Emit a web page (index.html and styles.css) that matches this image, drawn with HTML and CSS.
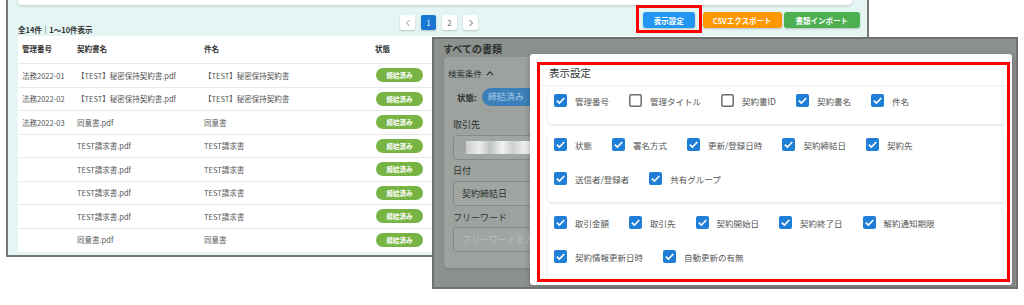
FILE: index.html
```html
<!DOCTYPE html>
<html lang="ja">
<head>
    <meta charset="UTF-8">
    <title>表示設定</title>
    <link rel="stylesheet" href="styles.css">
</head>
<body>
    <svg class="defs" width="0" height="0">
        <symbol id="cb-on" viewBox="0 0 13 13">
            <rect width="13" height="13" rx="2" fill="#1f7fd6"/>
            <path d="M2.8 6.6 L5.4 9.1 L10.3 4" fill="none" stroke="#fff" stroke-width="1.6"/>
        </symbol>
        <symbol id="cb-off" viewBox="0 0 13 13">
            <rect x="0.8" y="0.8" width="11.4" height="11.4" rx="1.5" fill="#fff" stroke="#6c6c6c" stroke-width="1.5"/>
        </symbol>
    </svg>

    <div class="stage">
        <!-- document list screenshot -->
        <section class="shot-list">
            <div class="top-card"></div>
            <div class="toolbar">
                <span class="count">全14件｜1～10件表示</span>
                <nav class="pager">
                    <span class="page"><svg width="6" height="8" viewBox="0 0 6 8"><path d="M4.5 1 L1.5 4 L4.5 7" fill="none" stroke="#999" stroke-width="1"/></svg></span>
                    <span class="page active">1</span>
                    <span class="page">2</span>
                    <span class="page"><svg width="6" height="8" viewBox="0 0 6 8"><path d="M1.5 1 L4.5 4 L1.5 7" fill="none" stroke="#666" stroke-width="1"/></svg></span>
                </nav>
                <span></span>
                <div class="actions">
                    <span class="mark"><button class="btn btn-blue">表示設定</button></span>
                    <button class="btn btn-orange">CSVエクスポート</button>
                    <button class="btn btn-green">書類インポート</button>
                </div>
            </div>
            <div class="doc-table">
                <div class="tr head"><span>管理番号</span><span>契約書名</span><span>件名</span><span>状態</span></div>
                <div class="tr"><span>法務2022-01</span><span>【TEST】秘密保持契約書.pdf</span><span>【TEST】秘密保持契約書</span><span><i class="badge">締結済み</i></span></div>
                <div class="tr"><span>法務2022-02</span><span>【TEST】秘密保持契約書.pdf</span><span>【TEST】秘密保持契約書</span><span><i class="badge">締結済み</i></span></div>
                <div class="tr"><span>法務2022-03</span><span>同意書.pdf</span><span>同意書</span><span><i class="badge">締結済み</i></span></div>
                <div class="tr"><span></span><span>TEST請求書.pdf</span><span>TEST請求書</span><span><i class="badge">締結済み</i></span></div>
                <div class="tr"><span></span><span>TEST請求書.pdf</span><span>TEST請求書</span><span><i class="badge">締結済み</i></span></div>
                <div class="tr"><span></span><span>TEST請求書.pdf</span><span>TEST請求書</span><span><i class="badge">締結済み</i></span></div>
                <div class="tr"><span></span><span>TEST請求書.pdf</span><span>TEST請求書</span><span><i class="badge">締結済み</i></span></div>
                <div class="tr"><span></span><span>同意書.pdf</span><span>同意書</span><span><i class="badge">締結済み</i></span></div>
            </div>
        </section>

        <!-- settings dialog screenshot, pasted over the first one -->
        <section class="shot-modal">
            <h2 class="page-title">すべての書類</h2>
            <div class="search-card">
                <div class="search-head">検索条件 <svg width="8" height="6" viewBox="0 0 8 6"><path d="M1 5 L4 1.8 L7 5" fill="none" stroke="#2e3230" stroke-width="1.1"/></svg></div>
                <div class="state-row"><b>状態:</b><span class="pill">締結済み</span></div>
                <div class="field-label">取引先</div>
                <div class="field"><span class="blur-img"></span></div>
                <div class="field-label gap-s">日付</div>
                <div class="field">契約締結日</div>
                <div class="field-label gap-m">フリーワード</div>
                <div class="field placeholder">フリーワードを入力</div>
            </div>

            <div class="modal">
                <div class="modal-body">
                    <div class="modal-title">表示設定</div>
                    <div class="groups">
                        <div class="group">
                            <div class="row">
                                <label class="item"><svg><use href="#cb-on"/></svg>管理番号</label>
                                <label class="item"><svg><use href="#cb-off"/></svg>管理タイトル</label>
                                <label class="item"><svg><use href="#cb-off"/></svg>契約書ID</label>
                                <label class="item"><svg><use href="#cb-on"/></svg>契約書名</label>
                                <label class="item"><svg><use href="#cb-on"/></svg>件名</label>
                            </div>
                        </div>
                        <div class="group">
                            <div class="row">
                                <label class="item"><svg><use href="#cb-on"/></svg>状態</label>
                                <label class="item"><svg><use href="#cb-on"/></svg>署名方式</label>
                                <label class="item"><svg><use href="#cb-on"/></svg>更新/登録日時</label>
                                <label class="item"><svg><use href="#cb-on"/></svg>契約締結日</label>
                                <label class="item"><svg><use href="#cb-on"/></svg>契約先</label>
                            </div>
                            <div class="row">
                                <label class="item"><svg><use href="#cb-on"/></svg>送信者/登録者</label>
                                <label class="item"><svg><use href="#cb-on"/></svg>共有グループ</label>
                            </div>
                        </div>
                        <div class="group">
                            <div class="row">
                                <label class="item"><svg><use href="#cb-on"/></svg>取引金額</label>
                                <label class="item"><svg><use href="#cb-on"/></svg>取引先</label>
                                <label class="item"><svg><use href="#cb-on"/></svg>契約開始日</label>
                                <label class="item"><svg><use href="#cb-on"/></svg>契約終了日</label>
                                <label class="item"><svg><use href="#cb-on"/></svg>解約通知期限</label>
                            </div>
                            <div class="row">
                                <label class="item"><svg><use href="#cb-on"/></svg>契約情報更新日時</label>
                                <label class="item"><svg><use href="#cb-on"/></svg>自動更新の有無</label>
                            </div>
                        </div>
                    </div>
                </div>
            </div>
        </section>
    </div>
</body>
</html>
```

FILE: styles.css
```css
* { box-sizing: border-box; }
body {
    margin: 0;
    background: #fff;
    font-family: "Noto Sans CJK JP", "Noto Sans", sans-serif;
    color: #555;
}
.defs { position: absolute; }
.stage {
    position: relative;
    width: 1024px;
    height: 305px;
    overflow: hidden;
}

/* document list */
.shot-list {
    margin-left: 6px;
    width: 863px;
    height: 257px;
    border: 2px solid #777;
    border-top: none;
    background: #e4f5f4;
    padding: 0 7px 0 10px;
}
.top-card {
    height: 5px;
    margin-right: 8px;
    background: #fff;
    border-radius: 0 0 4px 4px;
    box-shadow: 0 1px 3px rgba(0,0,0,0.18);
}
.toolbar {
    display: grid;
    grid-template-columns: 382px 78px 1fr auto;
    height: 31px;
}
.count {
    margin-top: 20px;
    font-size: 7.5px;
    line-height: 10px;
    font-weight: bold;
    color: #333;
}
.pager {
    display: flex;
    gap: 6px;
    margin-top: 10px;
}
.page {
    width: 15px;
    height: 15px;
    display: flex;
    align-items: center;
    justify-content: center;
    background: #fff;
    border-radius: 2px;
    box-shadow: 0 1px 2px rgba(0,0,0,0.2);
    font-size: 7px;
    color: #555;
}
.page.active { background: #1976d2; color: #fff; }
.actions {
    display: flex;
    align-items: flex-start;
    margin-top: 7px;
}
.btn {
    height: 16px;
    padding: 0 11px;
    border: none;
    border-radius: 3px;
    font-family: inherit;
    font-size: 7.5px;
    font-weight: bold;
    color: #fff;
    box-shadow: 0 1px 2px rgba(0,0,0,0.2);
}
.btn-blue { background: #2196f3; display: block; }
.btn-orange { background: #ff9800; padding: 0 10px; margin-right: 2px; }
.btn-green { background: #4caf50; padding: 0 12px; }
/* red annotation box round the settings button */
.mark {
    display: block;
    margin: -7px 1px 0 -7px;
    padding: 4px 4px 2px;
    border: 3px solid #f00;
}

.doc-table {
    background: #fff;
    height: 216px;
}
.tr {
    display: grid;
    grid-template-columns: 55px 127px 171px 1fr;
    align-items: center;
    height: 23.5px;
    padding-left: 4px;
    border-top: 1px solid #e9e9e9;
    font-size: 7.5px;
}
.tr.head {
    height: 27px;
    padding-bottom: 3px;
    border-top: none;
    font-weight: bold;
    color: #333;
}
.badge {
    display: block;
    width: 47px;
    height: 14px;
    line-height: 14px;
    margin-left: 1px;
    border-radius: 7px;
    background: #78b443;
    color: #fff;
    font-style: normal;
    font-size: 6.5px;
    font-weight: bold;
    text-align: center;
}

/* settings dialog screenshot */
.shot-modal {
    position: absolute;
    left: 432px;
    top: 37px;
    width: 586px;
    height: 252px;
    border: 2px solid #6f6f6f;
    background: #8c918e;
    overflow: hidden;
}
.page-title {
    margin: 0;
    padding: 3px 0 0 9px;
    font-size: 10px;
    line-height: 14px;
    font-weight: bold;
    color: #2b2f2d;
}
.search-card {
    margin: 1px 0 0 10px;
    width: 220px;
    height: 211px;
    padding: 8px 0 0 4px;
    background: #9da29f;
    border-radius: 4px;
    box-shadow: 0 1px 2px rgba(0,0,0,0.15);
    color: #2e3230;
    font-size: 8.5px;
}
.search-head {
    display: flex;
    align-items: center;
    gap: 4px;
    line-height: 16px;
}
.state-row {
    display: flex;
    align-items: center;
    height: 18px;
    margin-top: 7px;
    padding-left: 9px;
    gap: 5px;
}
.pill {
    height: 18px;
    line-height: 18px;
    padding: 0 20px 0 6px;
    border-radius: 9px;
    background: #3b80b8;
    color: #a4c8e6;
    font-size: 9px;
}
.field-label {
    margin: 12px 0 0 5px;
    line-height: 14px;
    font-size: 9px;
}
.field-label.gap-s { margin-top: 4px; }
.field-label.gap-m { margin-top: 5px; }
.field {
    display: flex;
    align-items: center;
    height: 25px;
    margin: 3px 0 0 5px;
    padding-left: 8px;
    border: 1px solid #858a87;
    border-radius: 3px;
    background: #a1a6a3;
    font-size: 9px;
    color: #2e3230;
}
.field.placeholder { margin-top: 2px; color: #b9bdbb; }
.blur-img {
    width: 75px;
    height: 13px;
    margin-left: 4px;
    background: linear-gradient(90deg, #c9ccca 0%, #eceeed 18%, #bfc3c0 32%, #f1f2f1 48%, #cdd0ce 62%, #eef0ef 78%, #dcdfdd 100%);
}

.modal {
    position: absolute;
    left: 96px;
    top: 15px;
    width: 482px;
    height: 231px;
    padding: 8px 2px 3px 7px;
    background: #fff;
    border-radius: 3px;
    box-shadow: 0 2px 6px rgba(0,0,0,0.25);
}
.modal-body {
    height: 100%;
    border: 3px solid #f00;
    overflow: hidden;
}
.modal-title {
    height: 21px;
    padding: 0 9px;
    line-height: 16px;
    font-size: 10.5px;
    color: #333;
    border-bottom: 1px solid #eee;
}
.groups {
    display: flex;
    flex-direction: column;
    gap: 8px;
    padding: 2px 1px 0 8px;
}
.group {
    display: flex;
    flex-direction: column;
    gap: 9px;
    padding: 0 6px 11px;
    border-radius: 4px;
    box-shadow: 0 1px 3px rgba(0,0,0,0.14);
}
.row {
    display: flex;
    height: 25px;
    align-items: center;
}
.item {
    display: flex;
    align-items: center;
    gap: 8px;
    margin-right: 20px;
    font-size: 8.5px;
    color: #555;
    white-space: nowrap;
}
.item svg {
    width: 13px;
    height: 13px;
}
```
